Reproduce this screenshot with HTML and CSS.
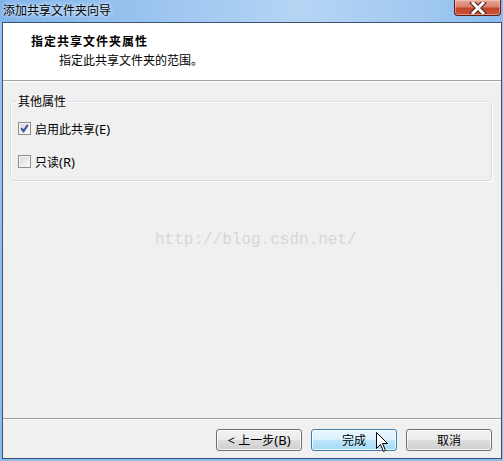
FILE: index.html
```html
<!DOCTYPE html>
<html lang="zh-CN">
<head>
<meta charset="utf-8">
<title>添加共享文件夹向导</title>
<link rel="stylesheet" href="styles.css">
</head>
<body>
<div class="window">
  <div class="titlebar">
    <span class="title">添加共享文件夹向导</span>
    <div class="close">
      <svg width="20" height="12" viewBox="0 0 20 12">
        <path d="M5 1 L15 11 M15 1 L5 11" stroke="#4a1a12" stroke-width="5" stroke-linecap="square"/>
        <path d="M5 1 L15 11 M15 1 L5 11" stroke="#ffffff" stroke-width="3" stroke-linecap="square"/>
      </svg>
    </div>
  </div>
  <div class="client">
    <div class="header">
      <div class="h-title">指定共享文件夹属性</div>
      <div class="h-sub">指定此共享文件夹的范围。</div>
    </div>
    <div class="main">
      <fieldset class="group">
        <legend class="legend">其他属性</legend>
        <label class="row">
          <span class="cb">
            <svg width="11" height="11" viewBox="0 0 11 11">
              <path d="M2.2 5.2 L4.5 8.2 L8.8 1.8" fill="none" stroke="#4656a0" stroke-width="2.2"/>
            </svg>
          </span>
          <span>启用此共享<span class="lat">(E)</span></span>
        </label>
        <label class="row row2">
          <span class="cb"></span>
          <span>只读<span class="lat">(R)</span></span>
        </label>
      </fieldset>
    </div>
    <div class="footer">
      <button class="btn"><span class="lat">&lt; </span>上一步<span class="lat">(B)</span></button>
      <button class="btn btn-hot">完成</button>
      <button class="btn">取消</button>
    </div>
  </div>
  <div class="watermark">http://blog.csdn.net/</div>
  <svg class="cursor" width="13" height="21" viewBox="0 0 13 21">
    <path d="M0.5 0.5 L0.5 16.5 L4.5 12.5 L7.5 19.5 L9.5 18.5 L6.5 11.5 L11.5 11.5 Z" fill="#ffffff" stroke="#000000" stroke-width="1"/>
  </svg>
</div>
</body>
</html>
```
FILE: styles.css
```css
html, body {
  margin: 0;
  padding: 0;
}
body {
  width: 503px;
  height: 461px;
  overflow: hidden;
  font-family: "Noto Sans CJK SC", "Noto Sans", sans-serif;
  font-size: 12px;
  color: #000;
}
.window {
  position: relative;
  width: 503px;
  height: 461px;
  display: flex;
  flex-direction: column;
  background: linear-gradient(to bottom, #9cc4ee 0%, #8dbbea 100%);
}
.titlebar {
  height: 22px;
  flex: none;
  display: flex;
  align-items: flex-start;
  justify-content: space-between;
  background: linear-gradient(to right, #7fb3ea 0%, #9fc7f1 35%, #b5d5f4 60%, #a0c8f0 85%, #8abbee 100%);
}
.title {
  padding-left: 3px;
  line-height: 20px;
  text-shadow: 0 0 6px #e8f2fc, 0 0 3px #e8f2fc;
}
.close {
  width: 45px;
  height: 15px;
  margin-right: 2px;
  border: 1px solid #5b2118;
  border-top: none;
  border-radius: 0 0 4px 4px;
  background: linear-gradient(to bottom, #e6a798 0%, #d98069 45%, #c3442c 55%, #c8553a 100%);
  box-shadow: inset 0 0 0 1px rgba(255, 220, 210, 0.45);
  display: flex;
  align-items: center;
  justify-content: center;
}
.close svg {
  display: block;
}
.client {
  flex: 1;
  margin: 0 1px 2px 2px;
  border: 1px solid #3b5170;
  background: #f0f0f0;
  display: flex;
  flex-direction: column;
}
.header {
  flex: none;
  background: #ffffff;
  border-bottom: 1px solid #a0a0a0;
  padding: 10px 0 0 28px;
  height: 47px;
}
.h-title {
  font-weight: bold;
  line-height: 16px;
  letter-spacing: 1px;
}
.h-sub {
  line-height: 16px;
  margin-top: 3px;
  padding-left: 28px;
}
.lat {
  font-family: "Noto Sans", "Open Sans", sans-serif;
  font-size: 13px;
}
.main {
  flex: 1;
  border-top: 1px solid #ffffff;
  padding: 11px 9px 0 7px;
}
.group {
  margin: 0;
  padding: 0 0 12px 7px;
  border: 1px solid #d5dfe5;
  border-radius: 3px;
  box-shadow: inset 1px 1px 0 #ffffff, 1px 1px 0 #ffffff;
  min-width: 0;
}
.legend {
  padding: 0 2px;
  margin-left: -2px;
  line-height: 16px;
}
.row {
  display: flex;
  align-items: center;
  gap: 4px;
  height: 13px;
  line-height: 13px;
  margin-top: 13px;
}
.row2 {
  margin-top: 20px;
}
.cb {
  width: 11px;
  height: 11px;
  flex: none;
  border: 1px solid #8e8f8f;
  background: linear-gradient(135deg, #d8d8d8 0%, #eeeeee 60%, #fafafa 100%);
  box-shadow: inset 0 0 0 1px #f4f4f4;
  display: flex;
}
.cb svg {
  display: block;
}
.footer {
  flex: none;
  border-top: 1px solid #a0a0a0;
  box-shadow: inset 0 1px 0 #ffffff;
  padding: 10px 9px 7px 0;
  display: flex;
  justify-content: flex-end;
  gap: 9px;
}
.btn {
  width: 86px;
  height: 22px;
  margin: 0;
  padding: 0;
  border: 1px solid #707070;
  border-radius: 3px;
  font-family: "Noto Sans CJK SC", "Noto Sans", sans-serif;
  font-size: 12px;
  line-height: 18px;
  color: #000;
  background: linear-gradient(to bottom, #f2f2f2 0%, #ebebeb 50%, #dddddd 50%, #cfcfcf 100%);
  box-shadow: inset 0 0 0 1px rgba(255, 255, 255, 0.75);
}
.btn-hot {
  border-color: #3c7fb1;
  background: linear-gradient(to bottom, #eaf6fd 0%, #d9f0fc 50%, #bee6fd 50%, #a7d9f5 100%);
}
.watermark {
  position: absolute;
  left: 155px;
  top: 230px;
  font-family: "Liberation Mono", "DejaVu Sans Mono", monospace;
  font-size: 16px;
  line-height: 20px;
  color: #d6d6d6;
}
.cursor {
  position: absolute;
  left: 376px;
  top: 432px;
}
```
